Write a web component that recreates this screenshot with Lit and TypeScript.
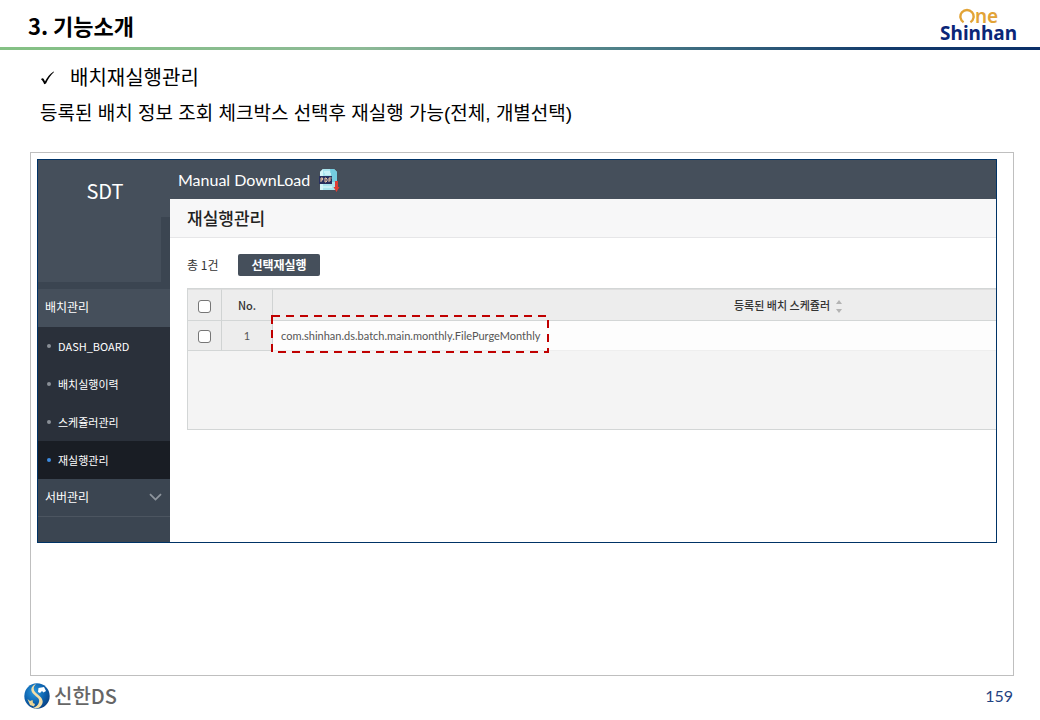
import { LitElement, html, css, svg } from "lit";
import { customElement, state } from "lit/decorators.js";
import { classMap } from "lit/directives/class-map.js";

interface MenuItem {
  label: string;
  active?: boolean;
}

const MENU: MenuItem[] = [
  { label: "DASH_BOARD" },
  { label: "배치실행이력" },
  { label: "스케쥴러관리" },
  { label: "재실행관리", active: true },
];

const JOBS = ["com.shinhan.ds.batch.main.monthly.FilePurgeMonthly"];

const checkMark = svg`<path d="M1 8.2 C2 7 3.2 7 3.9 8.2 L5 10.4 C7.3 6.3 9.8 3 13.6 0.6 L14 1 C10.6 4.2 8 8 6 12.6 L4.2 13.2 C3.5 11.3 2.5 9.2 1 8.2Z" fill="#000"/>`;

/** Batch console shown inside the slide. */
@customElement("batch-console")
export class BatchConsole extends LitElement {
  static styles = css`
    :host {
      display: grid;
      grid-template-columns: 132px minmax(0, 1fr);
      border: 1px solid #003366;
      background: #fff;
      overflow: hidden;
      font-family: Lato, "Noto Sans CJK KR", sans-serif;
    }
    .side {
      display: flex;
      flex-direction: column;
      background: #3b4551;
      color: #fff;
    }
    .brand {
      display: flex;
      height: 122px;
      background: linear-gradient(#454f5b, #454f5b) 0 0 / 123px 100% no-repeat,
        linear-gradient(#454f5b, #454f5b) 0 0 / 100% 57px no-repeat, #3b4551;
      justify-content: center;
      padding-left: 2px;
      box-sizing: border-box;
      font: 20px/62px "Noto Sans CJK KR", sans-serif;
    }
    .group {
      display: flex;
      align-items: center;
      justify-content: space-between;
      height: 38px;
      padding: 0 8px 2px 7px;
      box-sizing: border-box;
      font: 12px/18px "Noto Sans CJK KR", sans-serif;
      color: #fff;
      text-decoration: none;
    }
    .open {
      margin-top: 7px;
      background: #454f5b;
    }
    .closed {
      border-bottom: 1px solid #4c5560;
    }
    .menu {
      list-style: none;
      margin: 0;
      padding: 0;
      background: #2a303a;
    }
    .item {
      display: flex;
      align-items: center;
      gap: 7px;
      height: 38px;
      padding-left: 9px;
      font: 11px/16px "Noto Sans CJK KR", sans-serif;
      color: #fff;
      text-decoration: none;
    }
    .item::before {
      content: "";
      width: 4px;
      height: 4px;
      border-radius: 50%;
      background: #8a8f96;
    }
    .item.active {
      background: #191d24;
    }
    .item.active::before {
      background: #3d8be0;
    }
    .main {
      min-width: 0;
      padding-bottom: 112px;
    }
    .top {
      display: flex;
      align-items: center;
      gap: 9px;
      height: 39px;
      padding-left: 8px;
      background: #454f5b;
      color: #fff;
      font-size: 16px;
      line-height: 24px;
    }
    .title {
      margin: 0;
      height: 39px;
      box-sizing: border-box;
      padding-left: 17px;
      border-bottom: 1px solid #e6e6e8;
      background: #f7f7f8;
      color: #222;
      font: 500 17px/38px "Noto Sans CJK KR", sans-serif;
    }
    .tools {
      display: flex;
      align-items: center;
      gap: 20px;
      height: 50px;
      box-sizing: border-box;
      padding: 4px 0 0 17px;
      font: 12px/18px "Noto Sans CJK KR", sans-serif;
      color: #333;
    }
    .run {
      height: 22px;
      padding: 0 13px;
      border: 0;
      border-radius: 2px;
      background: #454f5b;
      color: #fff;
      font: bold 12px/20px "Noto Sans CJK KR", sans-serif;
    }
    .grid {
      width: calc(100% + 292px);
      margin-left: 17px;
      height: 142px;
      box-sizing: border-box;
      background: #f4f4f4;
      border: 1px solid #d3d6d6;
    }
    .table {
      width: 100%;
      table-layout: fixed;
      border-collapse: separate;
      border-spacing: 0;
      font-size: 12px;
      color: #555;
    }
    .check {
      width: 34px;
    }
    .no {
      width: 51px;
    }
    .cell {
      box-sizing: border-box;
      padding: 0;
      border-right: 1px solid #d0d3d3;
      border-bottom: 1px solid #d3d6d6;
      background: #ededed;
      text-align: center;
    }
    .head {
      height: 32px;
      border-top: 1px solid #dedede;
      color: #333;
      font: 500 11px/16px "Noto Sans CJK KR", sans-serif;
    }
    .body {
      height: 30px;
      font-size: 11px;
    }
    .job {
      background: #fdfdfd;
      text-align: left;
      padding-left: 8px;
      border-bottom-color: #eee;
      font-size: 11px;
      line-height: 16px;
    }
    .name {
      position: relative;
      display: inline-block;
    }
    .mark {
      position: absolute;
      left: -10px;
      top: -13px;
      width: 278px;
      height: 38px;
      z-index: 1;
    }
    .box {
      appearance: none;
      display: block;
      width: 13px;
      height: 13px;
      margin: 2px auto 0;
      border: 1px solid #767676;
      border-radius: 3px;
      background: #fff;
    }
    .box:checked {
      background: #454f5b;
    }
    .sort {
      margin-left: 6px;
      vertical-align: middle;
    }
  `;

  @state() private selected = new Set<number>();

  private toggle(i: number) {
    const next = new Set(this.selected);
    next.has(i) ? next.delete(i) : next.add(i);
    this.selected = next;
  }

  private toggleAll(e: Event) {
    const on = (e.target as HTMLInputElement).checked;
    this.selected = new Set(on ? JOBS.map((_, i) => i) : []);
  }

  render() {
    return html`
      <nav class="side">
        <div class="brand">SDT</div>
        <a class="group open" href="#batch">배치관리</a>
        <ul class="menu">
          ${MENU.map(
            (m) => html`<li>
              <a class=${classMap({ item: true, active: !!m.active })} href="#menu">${m.label}</a>
            </li>`
          )}
        </ul>
        <a class="group closed" href="#server"
          >서버관리
          <svg width="13" height="8" viewBox="0 0 13 8" fill="none" stroke="#8e959d" stroke-width="1.8">
            <path d="M1 1.2 L6.5 6.6 L12 1.2" />
          </svg>
        </a>
      </nav>
      <section class="main">
        <div class="top">
          <span>Manual DownLoad</span>
          <svg width="21" height="24" viewBox="0 0 21 24">
            <path d="M4 1 H15 L18 4 V22 H1 V4Z" fill="#a9e4ee" />
            <path d="M4 1 L1 4 V22 H4Z" fill="#d5f5f8" />
            <path d="M11 1 H15 L18 4 V14 H13Z" fill="#74cce0" />
            <path d="M5 4 H11 M6 6 H12 M4 19 H13" stroke="#e9fcff" />
            <rect x="0" y="8" width="13" height="8" fill="#28305e" />
            <path d="M2 14 V10 H3.6 V12 H2 M6 10 V14 H7 L8 13 V11 L7 10Z M10 14 V10 H12.5 M10 12 H12" fill="none" stroke="#f0c9a8" />
            <path d="M16 13 H19 V19 H20.5 L17.5 24 L14.5 19 H16Z" fill="#df3e35" />
          </svg>
        </div>
        <h2 class="title">재실행관리</h2>
        <div class="tools">
          <span>총 1건</span>
          <button class="run" type="button">선택재실행</button>
        </div>
        <div class="grid">
          <table class="table">
            <colgroup>
              <col class="check" />
              <col class="no" />
              <col />
            </colgroup>
            <thead>
              <tr>
                <th class="cell head">
                  <input class="box" type="checkbox" aria-label="전체 선택"
                    .checked=${this.selected.size === JOBS.length} @change=${this.toggleAll} />
                </th>
                <th class="cell head">No.</th>
                <th class="cell head">
                  등록된 배치 스케쥴러<svg class="sort" width="6" height="13" viewBox="0 0 6 13" fill="#b3b3b3">
                    <path d="M0 4 L3 0 L6 4Z M0 9 L3 13 L6 9Z" />
                  </svg>
                </th>
              </tr>
            </thead>
            <tbody>
              ${JOBS.map(
                (job, i) => html`<tr>
                  <td class="cell body">
                    <input class="box" type="checkbox" aria-label=${job}
                      .checked=${this.selected.has(i)} @change=${() => this.toggle(i)} />
                  </td>
                  <td class="cell body">${i + 1}</td>
                  <td class="cell job">
                    <span class="name"
                      >${job}
                      <svg class="mark" viewBox="0 0 278 38">
                        <rect x="1" y="1" width="276" height="36" fill="none" stroke="#c00000"
                          stroke-width="2" stroke-dasharray="8 6" />
                      </svg>
                    </span>
                  </td>
                </tr>`
              )}
            </tbody>
          </table>
        </div>
      </section>
    `;
  }
}

/** Slide with heading, description, framed screen and footer. */
@customElement("app-root")
export class AppRoot extends LitElement {
  static styles = css`
    :host {
      display: flex;
      flex-direction: column;
      min-height: 100vh;
      background: #fff;
      color: #000;
      font-family: "Noto Sans CJK KR", sans-serif;
    }
    .header {
      display: flex;
      justify-content: space-between;
      height: 47px;
      padding: 0 23px 0 28px;
    }
    .heading {
      margin: 0;
      font-size: 22px;
      line-height: 51px;
      font-weight: 700;
    }
    .logo {
      display: flex;
      flex-direction: column;
      align-items: center;
      padding-top: 8px;
      font: bold 19px/18px "Noto Sans", sans-serif;
      color: #0a2678;
    }
    .one {
      display: flex;
      align-items: center;
      height: 16px;
      color: #e2a336;
      font-weight: 600;
    }
    .rule {
      height: 3px;
      background: linear-gradient(90deg, #84c184, #8dba96 35%, #4d7f88 60%, #123a6b 85%, #0a2f68);
    }
    .intro {
      padding: 10px 40px 0;
    }
    .line {
      margin: 0;
      font: 19px/36px "Liberation Sans", "Noto Sans CJK KR", sans-serif;
    }
    .bullet {
      display: flex;
      align-items: center;
      gap: 15px;
      font-size: 20px;
    }
    .frame {
      flex: 1;
      margin: 20px 26px 0 30px;
      padding: 6px 16px 6px 6px;
      border: 1px solid #bfbfbf;
    }
    .footer {
      display: flex;
      align-items: center;
      justify-content: space-between;
      height: 40px;
      padding: 0 27px 4px 24px;
    }
    .company {
      display: flex;
      align-items: center;
      gap: 4px;
      color: #666;
      font: 500 20px/26px "Noto Sans CJK KR", sans-serif;
    }
    .page {
      font: 16px/24px Lato, sans-serif;
      color: #1f4382;
    }
  `;

  render() {
    return html`
      <header class="header">
        <h1 class="heading">3. 기능소개</h1>
        <div class="logo">
          <span class="one">
            <svg width="16" height="16" viewBox="0 0 16 16" fill="none" stroke="#e2a336" stroke-width="2.4" role="img" aria-label="O">
              <path d="M4.6 14.2 A6.6 6.6 0 1 1 11.4 14.2" />
            </svg>
            <span>ne</span>
          </span>
          <span>Shinhan</span>
        </div>
      </header>
      <div class="rule"></div>
      <div class="intro">
        <p class="line bullet">
          <svg width="15" height="14" viewBox="0 0 15 14">${checkMark}</svg>
          배치재실행관리
        </p>
        <p class="line">등록된 배치 정보 조회 체크박스 선택후 재실행 가능(전체, 개별선택)</p>
      </div>
      <main class="frame">
        <batch-console></batch-console>
      </main>
      <footer class="footer">
        <div class="company">
          <svg width="26" height="26" viewBox="0 0 26 26">
            <defs>
              <radialGradient id="globe" cx="0.4" cy="0.35" r="0.7">
                <stop offset="0" stop-color="#2b9be0" />
                <stop offset="0.6" stop-color="#0d62ae" />
                <stop offset="1" stop-color="#0a3f80" />
              </radialGradient>
            </defs>
            <circle cx="13" cy="13" r="12.7" fill="url(#globe)" />
            <path d="M12 1 C7 3 6 7 9 10.5 C12 14 16 15 15 19 C14.5 22 12 24 9 25 C14 26.5 18 23.5 18.6 19.5 C19.3 15 15 13 11.8 9.8 C9 7 9 4 12 1Z" fill="#f3dfa9" />
            <path d="M14.5 5 L20 4 L22 8 L19.5 9.5 L18 8 L16 10 L14 9Z" fill="#fff" />
            <path d="M3.5 16 L6 18 L8.5 17 L9 20 L11 21 L10 23.5 L6 22Z" fill="#ecd596" />
          </svg>
          <span>신한DS</span>
        </div>
        <span class="page">159</span>
      </footer>
    `;
  }
}
